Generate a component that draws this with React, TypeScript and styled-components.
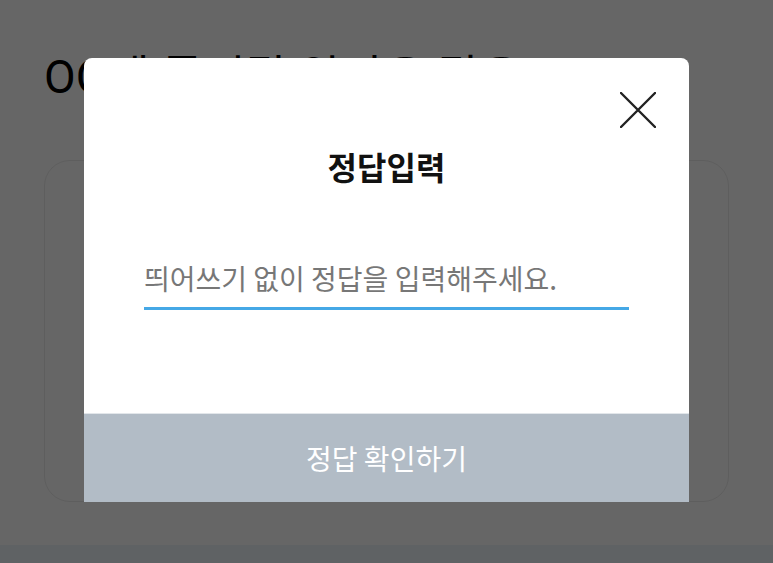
import * as React from 'react';
import styled, { createGlobalStyle } from 'styled-components';

const GlobalStyle = createGlobalStyle`
  html, body {
    margin: 0;
    padding: 0;
  }
  body {
    font-family: 'Noto Sans CJK KR', 'Noto Sans', Roboto, sans-serif;
    background: #ffffff;
  }
  * {
    box-sizing: border-box;
  }
`;

const Page = styled.div`
  width: 773px;
  height: 563px;
  background: #ffffff;
  display: flex;
  flex-direction: column;
  overflow: hidden;
`;

const Content = styled.div`
  flex: 1;
  padding: 0 44px;
`;

const Heading = styled.h1`
  margin: 48px 0 0;
  font-family: Roboto, 'Noto Sans CJK KR', sans-serif;
  font-size: 46px;
  font-weight: 400;
  line-height: 58px;
  color: #000000;
  white-space: nowrap;
`;

const QuizCard = styled.div`
  margin-top: 54px;
  height: 342px;
  border: 1.5px solid #ececec;
  border-radius: 26px;
`;

const BottomBar = styled.div`
  height: 18px;
  background: #edf4f9;
`;

const Overlay = styled.div`
  position: fixed;
  inset: 0;
  background: rgba(0, 0, 0, 0.6);
  display: flex;
  align-items: center;
  justify-content: center;
`;

const Modal = styled.div`
  position: relative;
  width: 605px;
  height: 444px;
  margin-bottom: 3px;
  background: #ffffff;
  border-radius: 8px 8px 0 0;
  display: flex;
  flex-direction: column;
  align-items: stretch;
`;

const CloseButton = styled.button`
  position: absolute;
  top: 34px;
  right: 33px;
  width: 36px;
  height: 36px;
  padding: 0;
  border: none;
  background: transparent;
  cursor: pointer;
  display: flex;
  align-items: center;
  justify-content: center;
`;

const Title = styled.h2`
  margin: 87px 0 0;
  text-align: center;
  font-size: 32px;
  font-weight: 700;
  line-height: 42px;
  color: #111111;
`;

const AnswerInput = styled.input`
  margin: 63px 60px 0;
  height: 60px;
  padding: 0 0 2px;
  border: none;
  border-bottom: 3px solid #45a8e6;
  outline: none;
  font-family: 'Noto Sans CJK KR', sans-serif;
  font-size: 28px;
  color: #222222;
  background: transparent;

  &::placeholder {
    color: #777777;
  }
`;

const Spacer = styled.div`
  flex: 1;
`;

const SubmitButton = styled.button`
  height: 89px;
  border: none;
  border-top: 1px solid #e2e6ea;
  background: #b2bcc6;
  color: #ffffff;
  font-family: 'Noto Sans CJK KR', sans-serif;
  font-size: 28px;
  font-weight: 400;
  cursor: pointer;
`;

function CloseIcon() {
  return (
    <svg width="36" height="36" viewBox="0 0 36 36" fill="none">
      <path
        d="M1 1 L35 35 M35 1 L1 35"
        stroke="#222222"
        strokeWidth="2.4"
        strokeLinecap="round"
      />
    </svg>
  );
}

export default function App() {
  const [answer, setAnswer] = React.useState('');

  return (
    <>
      <GlobalStyle />
      <Page>
        <Content>
          <Heading>OO에 들어갈 알맞은 말은</Heading>
          <QuizCard />
        </Content>
        <BottomBar />
      </Page>
      <Overlay>
        <Modal>
          <CloseButton aria-label="닫기">
            <CloseIcon />
          </CloseButton>
          <Title>정답입력</Title>
          <AnswerInput
            value={answer}
            onChange={(e) => setAnswer(e.target.value)}
            placeholder="띄어쓰기 없이 정답을 입력해주세요."
          />
          <Spacer />
          <SubmitButton>정답 확인하기</SubmitButton>
        </Modal>
      </Overlay>
    </>
  );
}
